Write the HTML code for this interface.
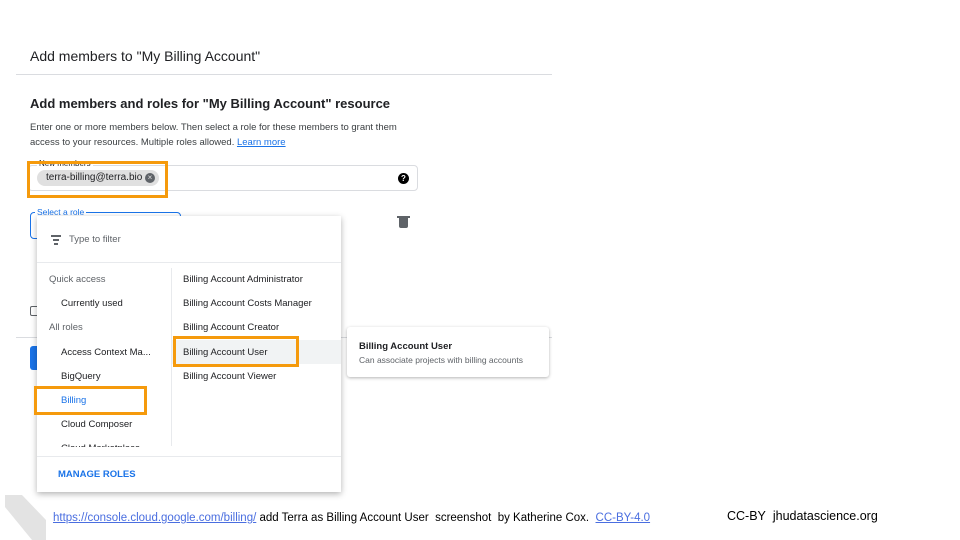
<!DOCTYPE html>
<html><head><style>
body{margin:0;width:960px;height:540px;background:#fff;position:relative;overflow:hidden;font-family:"Liberation Sans",Arial,sans-serif;color:#202124}
.a{position:absolute;white-space:nowrap}
.ob{position:absolute;border:3px solid #f59a0c;box-sizing:border-box}
</style></head><body>
<div class="a" style="left:30px;top:48px;font-size:14px;color:#202124">Add members to "My Billing Account"</div>
<div class="a" style="left:16px;top:74px;width:536px;height:1px;background:#dadce0"></div>
<div class="a" style="left:30px;top:96px;font-size:13px;font-weight:bold">Add members and roles for "My Billing Account" resource</div>
<div class="a" style="left:30px;top:120px;font-size:9.5px;line-height:15px;color:#3c4043">Enter one or more members below. Then select a role for these members to grant them<br>access to your resources. Multiple roles allowed. <span style="color:#1a73e8;text-decoration:underline">Learn more</span></div>
<div class="a" style="left:28px;top:165px;width:390px;height:26px;border:1px solid #dadce0;border-radius:4px;box-sizing:border-box"></div>
<div class="a" style="left:37px;top:159px;font-size:8px;background:#fff;padding:0 2px;height:7px;overflow:hidden;line-height:10px">New members</div>
<div class="a" style="left:37px;top:170px;height:16px;width:122px;background:#e0e0e0;border-radius:8px"></div>
<div class="a" style="left:46px;top:172px;font-size:10px">terra-billing@terra.bio</div>
<div class="a" style="left:145px;top:173px;width:10px;height:10px;border-radius:50%;background:#5f6368;color:#e0e0e0;font-size:8px;line-height:10px;text-align:center">×</div>
<div class="a" style="left:398px;top:173px;width:11px;height:11px;border-radius:50%;background:#000;color:#fff;font-size:8px;font-weight:bold;line-height:11px;text-align:center">?</div>
<div class="ob" style="left:27px;top:161px;width:141px;height:37px"></div>
<div class="a" style="left:30px;top:212px;width:151px;height:27px;border:1.5px solid #1a73e8;border-radius:4px;box-sizing:border-box"></div>
<div class="a" style="left:35px;top:207px;font-size:8.5px;color:#1a73e8;background:#fff;padding:0 2px">Select a role</div>
<div class="a" style="left:399px;top:218px;width:9px;height:10px;background:#5f6368;border-radius:0 0 2px 2px"></div>
<div class="a" style="left:397px;top:216px;width:13px;height:2px;background:#5f6368"></div>
<div class="a" style="left:30px;top:306px;width:9px;height:10px;border:1.5px solid #5f6368;border-radius:2px;box-sizing:border-box"></div>
<div class="a" style="left:16px;top:337px;width:536px;height:1px;background:#dadce0"></div>
<div class="a" style="left:30px;top:346px;width:12px;height:24px;background:#1a73e8;border-radius:3px"></div>
<div class="a" style="left:37px;top:216px;width:304px;height:276px;background:#fff;box-shadow:0 2px 6px rgba(0,0,0,.3)"></div>
<div class="a" style="left:51px;top:235px;width:10px;height:1.5px;background:#5f6368"></div>
<div class="a" style="left:53px;top:239px;width:6px;height:1.5px;background:#5f6368"></div>
<div class="a" style="left:54px;top:243px;width:4px;height:1.5px;background:#5f6368"></div>
<div class="a" style="left:69px;top:234px;font-size:9.5px;color:#5f6368">Type to filter</div>
<div class="a" style="left:37px;top:262px;width:304px;height:1px;background:#e8eaed"></div>
<div class="a" style="left:171px;top:268px;width:1px;height:178px;background:#e8eaed"></div>
<div class="a" style="left:49px;top:274px;font-size:9.5px;color:#5f6368">Quick access</div>
<div class="a" style="left:61px;top:298px;font-size:9.5px">Currently used</div>
<div class="a" style="left:49px;top:322px;font-size:9.5px;color:#5f6368">All roles</div>
<div class="a" style="left:61px;top:347px;font-size:9.5px">Access Context Ma...</div>
<div class="a" style="left:61px;top:371px;font-size:9.5px">BigQuery</div>
<div class="a" style="left:61px;top:395px;font-size:9.5px;color:#1a73e8">Billing</div>
<div class="a" style="left:61px;top:419px;font-size:9.5px">Cloud Composer</div>
<div class="a" style="left:61px;top:443px;font-size:9.5px;height:4px;overflow:hidden">Cloud Marketplace</div>
<div class="a" style="left:172px;top:340px;width:169px;height:24px;background:#f1f3f4"></div>
<div class="a" style="left:183px;top:274px;font-size:9.5px">Billing Account Administrator</div>
<div class="a" style="left:183px;top:298px;font-size:9.5px">Billing Account Costs Manager</div>
<div class="a" style="left:183px;top:322px;font-size:9.5px">Billing Account Creator</div>
<div class="a" style="left:183px;top:347px;font-size:9.5px">Billing Account User</div>
<div class="a" style="left:183px;top:371px;font-size:9.5px">Billing Account Viewer</div>
<div class="a" style="left:37px;top:456px;width:304px;height:1px;background:#e8eaed"></div>
<div class="a" style="left:58px;top:469px;font-size:9.5px;font-weight:bold;color:#1a73e8">MANAGE ROLES</div>
<div class="ob" style="left:34px;top:386px;width:113px;height:29px"></div>
<div class="ob" style="left:173px;top:336px;width:126px;height:31px"></div>
<div class="a" style="left:347px;top:327px;width:202px;height:50px;background:#fff;box-shadow:0 1px 3px rgba(0,0,0,.3);border-radius:3px"></div>
<div class="a" style="left:359px;top:341px;font-size:9.5px;font-weight:bold">Billing Account User</div>
<div class="a" style="left:359px;top:355px;font-size:8.5px;color:#5f6368">Can associate projects with billing accounts</div>
<svg class="a" style="left:0;top:492px" width="50" height="48"><polygon points="5,3 22,3 46,28 46,48 32,48 5,15" fill="#e3e3e3"/></svg>
<div class="a" style="left:53px;top:512px;font-size:11.5px;color:#000"><span style="color:#4a6ee0;text-decoration:underline">https://console.cloud.google.com/billing/</span> add Terra as Billing Account User&nbsp; screenshot&nbsp; by Katherine Cox.&nbsp; <span style="color:#4a6ee0;text-decoration:underline">CC-BY-4.0</span></div>
<div class="a" style="left:727px;top:509px;font-size:12.5px;color:#000">CC-BY&nbsp; jhudatascience.org</div>
</body></html>
